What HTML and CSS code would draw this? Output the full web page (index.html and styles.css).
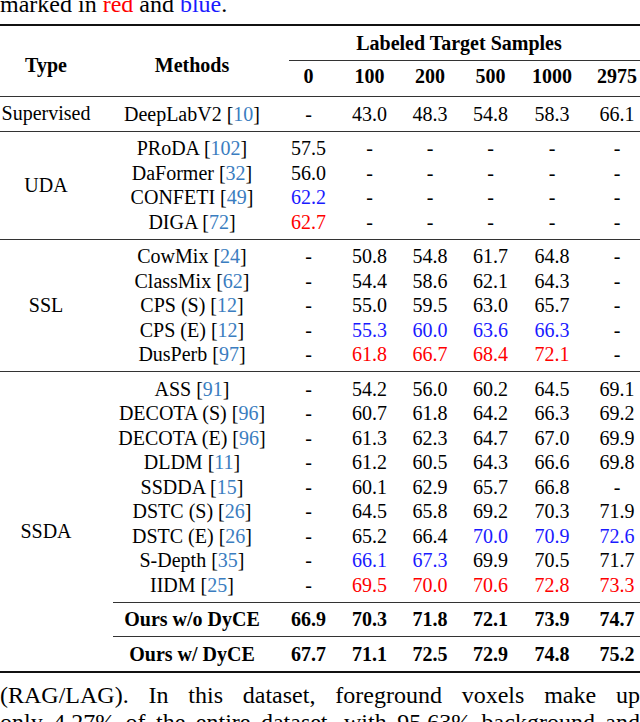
FILE: index.html
```html
<!DOCTYPE html>
<html lang="en">
<head>
<meta charset="utf-8">
<title>Results table</title>
<link rel="stylesheet" href="styles.css">
</head>
<body>
<div class="page">
  <p class="caption-tail">marked in <span class="red">red</span> and <span class="blue">blue</span>.</p>

  <div class="table">
    <div class="section head">
      <div class="type-cell head-label">Type</div>
      <div class="methods-head head-label">Methods</div>
      <div class="head-right">
        <div class="group-title">Labeled Target Samples</div>
        <div class="cmid"></div>
        <div class="num-head">
          <span>0</span><span>100</span><span>200</span><span>500</span><span>1000</span><span>2975</span>
        </div>
      </div>
    </div>

    <div class="section">
      <div class="type-cell">Supervised</div>
      <div class="rows">
        <div class="row"><span>DeepLabV2 [<span class="ref">10</span>]</span><span>-</span><span>43.0</span><span>48.3</span><span>54.8</span><span>58.3</span><span>66.1</span></div>
      </div>
    </div>

    <div class="section">
      <div class="type-cell">UDA</div>
      <div class="rows">
        <div class="row"><span>PRoDA [<span class="ref">102</span>]</span><span>57.5</span><span>-</span><span>-</span><span>-</span><span>-</span><span>-</span></div>
        <div class="row"><span>DaFormer [<span class="ref">32</span>]</span><span>56.0</span><span>-</span><span>-</span><span>-</span><span>-</span><span>-</span></div>
        <div class="row"><span>CONFETI [<span class="ref">49</span>]</span><span class="blue">62.2</span><span>-</span><span>-</span><span>-</span><span>-</span><span>-</span></div>
        <div class="row"><span>DIGA [<span class="ref">72</span>]</span><span class="red">62.7</span><span>-</span><span>-</span><span>-</span><span>-</span><span>-</span></div>
      </div>
    </div>

    <div class="section">
      <div class="type-cell">SSL</div>
      <div class="rows">
        <div class="row"><span>CowMix [<span class="ref">24</span>]</span><span>-</span><span>50.8</span><span>54.8</span><span>61.7</span><span>64.8</span><span>-</span></div>
        <div class="row"><span>ClassMix [<span class="ref">62</span>]</span><span>-</span><span>54.4</span><span>58.6</span><span>62.1</span><span>64.3</span><span>-</span></div>
        <div class="row"><span>CPS (S) [<span class="ref">12</span>]</span><span>-</span><span>55.0</span><span>59.5</span><span>63.0</span><span>65.7</span><span>-</span></div>
        <div class="row"><span>CPS (E) [<span class="ref">12</span>]</span><span>-</span><span class="blue">55.3</span><span class="blue">60.0</span><span class="blue">63.6</span><span class="blue">66.3</span><span>-</span></div>
        <div class="row"><span>DusPerb [<span class="ref">97</span>]</span><span>-</span><span class="red">61.8</span><span class="red">66.7</span><span class="red">68.4</span><span class="red">72.1</span><span>-</span></div>
      </div>
    </div>

    <div class="section last">
      <div class="type-cell ssda">SSDA</div>
      <div class="rows">
        <div class="row"><span>ASS [<span class="ref">91</span>]</span><span>-</span><span>54.2</span><span>56.0</span><span>60.2</span><span>64.5</span><span>69.1</span></div>
        <div class="row"><span>DECOTA (S) [<span class="ref">96</span>]</span><span>-</span><span>60.7</span><span>61.8</span><span>64.2</span><span>66.3</span><span>69.2</span></div>
        <div class="row"><span>DECOTA (E) [<span class="ref">96</span>]</span><span>-</span><span>61.3</span><span>62.3</span><span>64.7</span><span>67.0</span><span>69.9</span></div>
        <div class="row"><span>DLDM [<span class="ref">11</span>]</span><span>-</span><span>61.2</span><span>60.5</span><span>64.3</span><span>66.6</span><span>69.8</span></div>
        <div class="row"><span>SSDDA [<span class="ref">15</span>]</span><span>-</span><span>60.1</span><span>62.9</span><span>65.7</span><span>66.8</span><span>-</span></div>
        <div class="row"><span>DSTC (S) [<span class="ref">26</span>]</span><span>-</span><span>64.5</span><span>65.8</span><span>69.2</span><span>70.3</span><span>71.9</span></div>
        <div class="row"><span>DSTC (E) [<span class="ref">26</span>]</span><span>-</span><span>65.2</span><span>66.4</span><span class="blue">70.0</span><span class="blue">70.9</span><span class="blue">72.6</span></div>
        <div class="row"><span>S-Depth [<span class="ref">35</span>]</span><span>-</span><span class="blue">66.1</span><span class="blue">67.3</span><span>69.9</span><span>70.5</span><span>71.7</span></div>
        <div class="row"><span>IIDM [<span class="ref">25</span>]</span><span>-</span><span class="red">69.5</span><span class="red">70.0</span><span class="red">70.6</span><span class="red">72.8</span><span class="red">73.3</span></div>
        <div class="subrule"></div>
        <div class="row bold"><span>Ours w/o DyCE</span><span>66.9</span><span>70.3</span><span>71.8</span><span>72.1</span><span>73.9</span><span>74.7</span></div>
        <div class="subrule"></div>
        <div class="row bold"><span>Ours w/ DyCE</span><span>67.7</span><span>71.1</span><span>72.5</span><span>72.9</span><span>74.8</span><span>75.2</span></div>
      </div>
    </div>
  </div>

  <div class="body-text">
    <div class="line">(RAG/LAG). In this dataset, foreground voxels make up</div>
    <div class="line">only 4.27% of the entire dataset, with 95.63% background and</div>
  </div>
</div>
</body>
</html>
```

FILE: styles.css
```css
html, body {
  margin: 0;
  padding: 0;
  background: #ffffff;
  overflow: hidden;
}

.page {
  width: 640px;
  display: flow-root;
  font-family: "Liberation Serif", "Times New Roman", serif;
  color: #000;
}

.caption-tail {
  margin: -9px 0 0 0;
  font-size: 24px;
  line-height: 26px;
  height: 26px;
  white-space: nowrap;
}

.red { color: #ff0000; }
.blue { color: #1a1aff; }
.ref { color: #3a7dc0; }

.table {
  margin-top: 7px;
  font-size: 20px;
  border-top: 2px solid #111;
  border-bottom: 2px solid #111;
}

.section {
  display: flex;
  border-top: 1px solid #333;
}

.section.head {
  border-top: none;
}

.type-cell {
  width: 92px;
  flex: none;
  display: flex;
  align-items: center;
  justify-content: center;
  white-space: nowrap;
}

.type-cell.ssda {
  padding-top: 21px;
  box-sizing: border-box;
}

.head-label {
  font-weight: bold;
  padding-top: 8px;
  box-sizing: border-box;
}

.methods-head {
  width: 186px;
  flex: none;
  display: flex;
  align-items: center;
  justify-content: center;
  padding-left: 14px;
}

.head-right {
  width: 362px;
  flex: none;
  padding: 4.75px 0 7.75px;
  font-weight: bold;
}

.group-title {
  text-align: center;
  height: 24.5px;
  line-height: 24.5px;
  white-space: nowrap;
}

.cmid {
  height: 1px;
  background: #333;
  margin: 4.75px 0 2.75px 11px;
}

.num-head {
  display: grid;
  grid-template-columns: 61px 61px 60px 61px 62px 57px;
  height: 24.5px;
  line-height: 24.5px;
  text-align: center;
}

.num-head > span:last-child {
  padding-left: 11px;
}

.rows {
  width: 548px;
  flex: none;
  padding: 4.5px 0;
}

.row {
  display: grid;
  grid-template-columns: 186px 61px 61px 60px 61px 62px 57px;
  height: 24.5px;
  line-height: 24.5px;
  text-align: center;
  white-space: nowrap;
}

.row > span:first-child {
  padding-left: 14px;
}

.row > span:last-child {
  padding-left: 11px;
}

.row.bold {
  font-weight: bold;
}

.subrule {
  height: 1px;
  background: #333;
  margin: 4.5px 0 4.5px 21px;
}

.body-text {
  margin-top: 9px;
  font-size: 24px;
  line-height: 27px;
}

.body-text .line {
  text-align: justify;
  text-align-last: justify;
  white-space: nowrap;
}
```
